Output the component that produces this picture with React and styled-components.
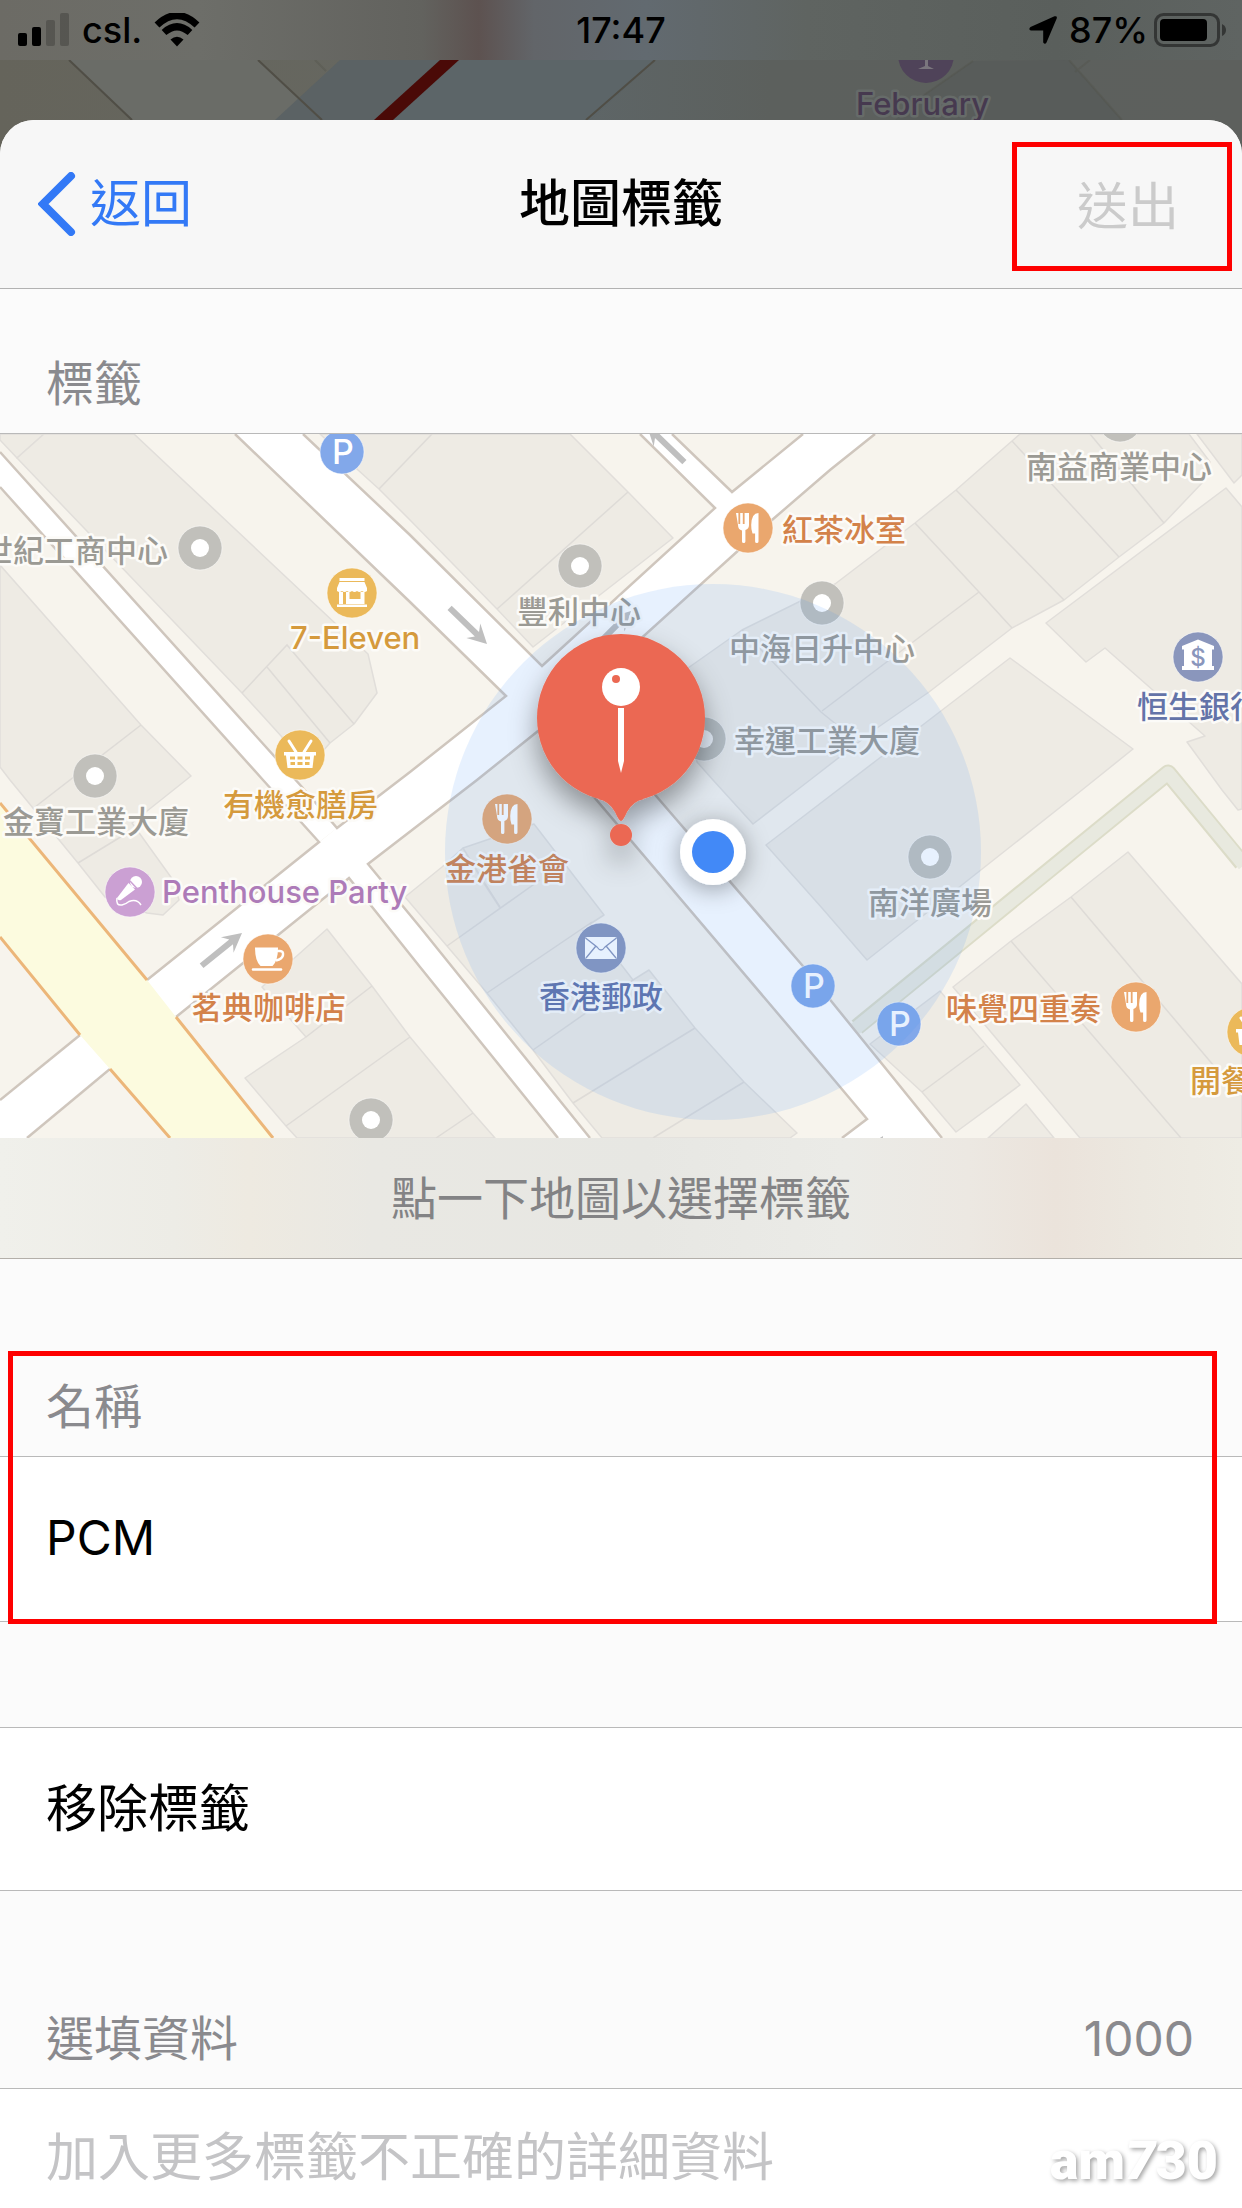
import React, { useState } from 'react';
import styled, { createGlobalStyle } from 'styled-components';

const FONT = 'Inter, "Noto Sans CJK TC", sans-serif';

const COLORS = {
	grey: { pin: '#c1c0bb', text: '#9b9a94' },
	amber: { pin: '#ebb95a', text: '#d59a3d' },
	orange: { pin: '#eaa76e', text: '#d3824a' },
	purple: { pin: '#cba0d3', text: '#ad7bb8' },
	indigo: { pin: '#8a96bc', text: '#6373a8' },
	blue: { pin: '#82a8ea', text: '#6373a8' },
};

const BUILDINGS = [
	'0,434 44,434 17,458 0,440',
	'17,458 44,434 134,434 337,625 368,654 377,693 354,724 330,743 313,762 282,737 242,693',
	'0,565 141,725 191,776 132,823 173,880 179,900 163,915 147,913 105,897 78,863 10,780 0,767',
	'320,434 358,470 379,489 410,520 497,609 533,647 673,538 628,492 570,434',
	'1020,434 1012,441 956,490 915,523 835,584 742,630 688,668 697,762 713,780 753,824 810,780 877,728 929,692 1012,628 1064,600 1119,557 1164,523 1202,483 1210,462 1189,434',
	'1197,434 1234,483 1242,475 1242,434',
	'1226,488 1046,623 1086,662 1105,648 1205,736 1187,742 1222,790 1238,810 1242,809 1242,507',
	'1010,658 1133,749 1082,790 867,960 822,908 766,845 877,760',
	'1128,852 1071,897 1011,941 953,987 1080,1138 1242,1138 1242,984',
	'940,991 870,1044 922,1092 956,1132 1020,1085',
	'1026,1104 988,1138 1054,1138',
	'405,897 442,867 463,848 500,908 485,885 463,848 534,824 604,915 590,924 633,980 649,970 695,1028 744,1082 797,1133 790,1138 602,1138 573,1103 533,1050 487,993 447,946',
	'327,929 372,986 410,1037 473,1113 495,1138 297,1138 286,1126 245,1078 306,1037 262,987',
];

const WALLS = [
	'242,693 287,645 354,724',
	'267,667 330,743',
	'141,725 35,807',
	'132,830 78,863',
	'432,434 379,489',
	'628,492 497,609',
	'1012,441 1119,557',
	'956,490 1064,600',
	'915,523 979,592 1012,628',
	'979,592 822,711',
	'1090,434 1164,523',
	'742,630 821,712 837,725',
	'1071,897 1214,1066',
	'1011,941 1181,1138',
	'984,1046 922,1092',
	'447,946 540,880',
	'487,993 592,922',
	'533,1050 633,980',
	'573,1103 695,1028',
	'653,1138 744,1082',
	'485,884 500,907',
	'372,986 306,1037',
	'410,1037 286,1126',
	'473,1113 436,1138',
];

const ROADS = [
	'0,452 302,787 337,828 319,842 263,780 0,487',
	'235,434 303,434 410,535 542,666 715,508 640,434 672,434 732,492 803,434 875,434 830,470 772,520 574,699 657,797 802,965 942,1138 842,1138 867,1119 830,1075 538,731 477,780 368,864 420,927 590,1138 558,1138 420,967 349,878 27,1138 0,1138 0,1100 337,828 506,696 410,602',
];

const KERBS = [
	'0,452 302,787 337,828 410,772 506,696 410,602 235,434',
	'0,487 263,780 319,842 147,980',
	'80,1035 0,1100',
	'303,434 410,535 542,666 715,508 640,434',
	'672,434 732,492 803,434',
	'875,434 830,470 772,520 574,699 657,797 802,965 942,1138',
	'842,1138 867,1119 830,1075 538,731 477,780 368,864 420,927 590,1138',
	'558,1138 420,967 349,878 176,1017',
	'110,1069 27,1138',
];

const ARROWS = [
	{ x: 487, y: 644, angle: 44 },
	{ x: 647, y: 426, angle: 224 },
	{ x: 631, y: 611, angle: -45 },
	{ x: 242, y: 933, angle: -39 },
	{ x: 883, y: 1136, angle: -60 },
];

const PLACES = [
	{ x: 200, y: 548, tone: 'grey', icon: 'dot', name: '世紀工商中心', tx: -18, ty: 562 },
	{ x: 95, y: 776, tone: 'grey', icon: 'dot', name: '金寶工業大廈', tx: 3, ty: 833 },
	{ x: 580, y: 566, tone: 'grey', icon: 'dot', name: '豐利中心', tx: 517, ty: 623 },
	{ x: 822, y: 603, tone: 'grey', icon: 'dot', name: '中海日升中心', tx: 729, ty: 660 },
	{ x: 704, y: 739, tone: 'grey', icon: 'dot', name: '幸運工業大廈', tx: 734, ty: 752 },
	{ x: 1120, y: 420, tone: 'grey', icon: 'dot', name: '南益商業中心', tx: 1026, ty: 478 },
	{ x: 930, y: 857, tone: 'grey', icon: 'dot', name: '南洋廣場', tx: 868, ty: 914 },
	{ x: 371, y: 1120, tone: 'grey', icon: 'dot' },
	{ x: 342, y: 452, tone: 'blue', icon: 'parking' },
	{ x: 813, y: 986, tone: 'blue', icon: 'parking' },
	{ x: 899, y: 1024, tone: 'blue', icon: 'parking' },
	{ x: 352, y: 593, tone: 'amber', icon: 'store', name: '7-Eleven', tx: 290, ty: 649 },
	{ x: 300, y: 755, tone: 'amber', icon: 'basket', name: '有機愈膳房', tx: 223, ty: 816 },
	{ x: 1252, y: 1032, tone: 'amber', icon: 'basket', name: '開餐', tx: 1190, ty: 1092 },
	{ x: 748, y: 528, tone: 'orange', icon: 'food', name: '紅茶冰室', tx: 782, ty: 541 },
	{ x: 507, y: 819, tone: 'orange', icon: 'food', name: '金港雀會', tx: 445, ty: 880 },
	{ x: 1136, y: 1007, tone: 'orange', icon: 'food', name: '味覺四重奏', tx: 946, ty: 1020 },
	{ x: 268, y: 959, tone: 'orange', icon: 'cup', name: '茗典咖啡店', tx: 191, ty: 1019 },
	{ x: 130, y: 892, tone: 'purple', icon: 'mic', name: 'Penthouse Party', tx: 162, ty: 903 },
	{ x: 601, y: 948, tone: 'indigo', icon: 'mail', name: '香港郵政', tx: 539, ty: 1008 },
	{ x: 1198, y: 657, tone: 'indigo', icon: 'bank', name: '恒生銀行', tx: 1137, ty: 718 },
];

function PlaceIcon({ icon, color }) {
	switch (icon) {
		case 'dot':
			return <circle r="9" fill="#fff" />;
		case 'parking':
			return (
				<PinLetter size={34} y="12" x="1" fill="#fff">
					P
				</PinLetter>
			);
		case 'food':
			return (
				<g fill="#fff">
					<path d="M-12-15h2.400v11h1.800v-11h2.600v11h1.800v-11H1v12q0 4-3.600 5v11.500q0 1.500-1.700 1.500t-1.700-1.500V2.500q-4-1-4-5.500z" />
					<path d="M10.500-15v28.500q0 1.500-1.700 1.500t-1.700-1.500V5.500H4.500Q3 1 3.200-3 3.500-15 10.500-15z" />
				</g>
			);
		case 'store':
			return (
				<g fill="#fff">
					<path d="M-12.500-15h25v3h-25zM-12.500-11h25l2.500 6v3q-2.500 2-5 0-2.500 2-5 0-2.500 2-5 0-2.500 2-5 0-2.500 2-5 0-2.500 2-5 0v-3z" />
					<path fillRule="evenodd" d="M-13-1h4v12h-4zM-6-1h3.500v7h11v-7h4v12h-18.500z" />
					<path d="M-15 11.500h30v2.500h-30z" />
				</g>
			);
		case 'basket':
			return (
				<g>
					<path d="M-11-14-4-3M11-14 4-3" stroke="#fff" strokeWidth="3" strokeLinecap="round" />
					<path d="M-16-3h32v3.500h-2L12.500 13h-25L-14 .5h-2z" fill="#fff" />
					<path
						d="M-10 1.500h5v3h-5zM-2.500 1.500h5v3h-5zM5 1.500h5v3h-5zM-9.500 7h4.500v3h-4.500zM-2.500 7h5v3h-5zM5 7h4.500v3H5z"
						fill={color}
					/>
				</g>
			);
		case 'cup':
			return (
				<g>
					<path d="M-13-11.500h23Q10 2 4.500 7h-12Q-13 2-13-11.500z" fill="#fff" />
					<path d="M9-8h3q3.500 0 3 4T8 1.500" fill="none" stroke="#fff" strokeWidth="2.500" />
					<path d="M-15 10.500h28" stroke="#fff" strokeWidth="2.500" strokeLinecap="round" />
				</g>
			);
		case 'mic':
			return (
				<g>
					<circle cx="6" cy="-10" r="6" fill="#fff" />
					<path d="M-1.500-9 5-2.500-9 8q-3 1-4-2z" fill="#fff" />
					<path d="M0-11 7-3.500" stroke={color} strokeWidth="1.500" />
					<path d="M-13 6q-1.500 8 5 7 4-1 7-3.500 8-3 12 3.500" fill="none" stroke="#fff" strokeWidth="1.500" />
				</g>
			);
		case 'mail':
			return (
				<g>
					<rect x="-16" y="-11" width="32" height="22" rx="2" fill="#fff" />
					<path
						d="M-15.500-10-4-1Q0 5 4-1L15.500-10M-15 10-5.500-1.500M15 10 5.500-1.500"
						fill="none"
						stroke={color}
						strokeWidth="1.300"
					/>
				</g>
			);
		case 'bank':
			return (
				<g>
					<path d="M-16-11 0-17.500 16-11v3.500h-2V9h2v4h-32V9h2V-7.500h-2z" fill="#fff" />
					<PinLetter size={24} y="9" fill={color}>
						$
					</PinLetter>
				</g>
			);
		default:
			return null;
	}
}

function Place({ x, y, tone, icon, name, tx, ty }) {
	const { pin, text } = COLORS[tone];
	const small = icon === 'dot' || icon === 'parking';

	return (
		<g>
			<g transform={`translate(${x} ${y})`}>
				<circle r={small ? 22 : 25} fill={pin} stroke="#fff" strokeOpacity="0.5" strokeWidth="1" />
				<PlaceIcon icon={icon} color={pin} />
			</g>
			{name && (
				<PlaceName x={tx} y={ty} fill={text}>
					{name}
				</PlaceName>
			)}
		</g>
	);
}

function StreetMap() {
	return (
		<MapCanvas viewBox="0 434 1242 704" role="img" aria-label="地圖">
			<defs>
				<filter id="pinShadow" x="-50%" y="-50%" width="200%" height="200%">
					<feDropShadow dx="0" dy="14" stdDeviation="14" floodOpacity="0.38" />
				</filter>
				<filter id="dotShadow" x="-100%" y="-100%" width="300%" height="300%">
					<feDropShadow dx="0" dy="4" stdDeviation="12" floodOpacity="0.35" />
				</filter>
			</defs>
			<rect y="434" width="1242" height="704" fill="#f7f4ed" />
			<g fill="#eeebe4" stroke="#e1deda" strokeWidth="1.500" strokeLinejoin="round">
				{BUILDINGS.map((points) => (
					<polygon key={points} points={points} />
				))}
			</g>
			<g fill="none" stroke="#dedbd7" strokeWidth="1.500">
				{WALLS.map((points) => (
					<polyline key={points} points={points} />
				))}
			</g>
			<g fill="none" strokeLinejoin="round">
				<path d="M857 1027 1168 773 1242 863" stroke="#dcdcc8" strokeWidth="17" />
				<path d="M855 1029 1168 773 1244 865" stroke="#e8e9df" strokeWidth="13" />
			</g>
			<g fill="#fff">
				{ROADS.map((points) => (
					<polygon key={points} points={points} />
				))}
			</g>
			<g fill="none" stroke="#cfc6bd" strokeWidth="2.500">
				{KERBS.map((points) => (
					<polyline key={points} points={points} />
				))}
			</g>
			<polygon points="0,803 147,980 176,1017 273,1138 170,1138 110,1069 80,1035 0,937" fill="#fcfbdf" />
			<path
				d="M0 803 147 980M176 1017 273 1138M0 937 80 1035M110 1069 170 1138"
				fill="none"
				stroke="#ecb679"
				strokeWidth="3"
			/>
			{ARROWS.map(({ x, y, angle }) => (
				<path
					key={`${x}-${y}`}
					d="M0 0-19-10-14-3H-52V3H-14L-19 10z"
					transform={`translate(${x} ${y}) rotate(${angle})`}
					fill="#bfbfbf"
				/>
			))}
			{PLACES.map((place) => (
				<Place key={`${place.x}-${place.y}`} {...place} />
			))}
			<circle cx="713" cy="852" r="268" fill="#428cfa" fillOpacity="0.127" />
			<g filter="url(#dotShadow)">
				<circle cx="713" cy="852" r="33" fill="#fff" />
			</g>
			<circle cx="713" cy="852" r="21" fill="#4289f7" />
			<g filter="url(#pinShadow)" fill="#eb6852">
				<circle cx="621" cy="718" r="84" />
				<path d="M598 799q11 2 17 13 4 9 6 9t6-9q6-11 17-13z" />
				<circle cx="621" cy="835" r="11" />
			</g>
			<circle cx="621" cy="687" r="19" fill="#fff" />
			<circle cx="616" cy="679" r="4" fill="#eb6852" />
			<path d="M618 708h6v53l-3 12-3-12z" fill="#fff" />
		</MapCanvas>
	);
}

function Backdrop() {
	return (
		<BackdropArt viewBox="0 0 1242 170" preserveAspectRatio="xMidYMin slice" aria-hidden="true">
			<defs>
				<linearGradient id="land">
					<stop offset="0" stopColor="#65645b" />
					<stop offset="0.300" stopColor="#666760" />
					<stop offset="0.450" stopColor="#5e6668" />
					<stop offset="0.620" stopColor="#5c605d" />
					<stop offset="1" stopColor="#5d605d" />
				</linearGradient>
				<linearGradient id="bar">
					<stop offset="0" stopColor="#6c6b65" />
					<stop offset="0.160" stopColor="#6d6e69" />
					<stop offset="0.340" stopColor="#62625e" />
					<stop offset="0.385" stopColor="#5d5250" />
					<stop offset="0.430" stopColor="#626569" />
					<stop offset="0.520" stopColor="#626a70" />
					<stop offset="0.650" stopColor="#5f6461" />
					<stop offset="0.850" stopColor="#5a5f5c" />
					<stop offset="1" stopColor="#5f6462" />
				</linearGradient>
			</defs>
			<rect width="1242" height="170" fill="url(#land)" />
			<path d="M69 60H258L322 120H132z" fill="#6a6c67" />
			<path d="M340 60H655L590 120H275z" fill="#5b6264" />
			<path d="M459 60H655L590 120H393z" fill="#5c6568" />
			<path d="M973 61 924 95 895 120H1122L1069 60z" fill="#585c5a" />
			<g fill="none" stroke="#504e46" strokeWidth="2">
				<path d="M69 60 132 120M258 60 322 120M655 60 586 120" />
				<path d="M315 60 326 71M973 61 924 95M1069 60 1122 120M1075 72 1090 60" strokeOpacity="0.300" />
			</g>
			<path d="M440 60H459L393 120H374z" fill="#4a0a07" />
			<circle cx="926" cy="55" r="28" fill="#4f4359" />
			<path d="M925 55h3v11l6 3h-16l7-3z" fill="#7a767d" />
			<PlaceName x="856" y="115" fill="#46394f" $dim>
				February
			</PlaceName>
			<rect width="1242" height="60" fill="url(#bar)" />
		</BackdropArt>
	);
}

function StatusBar() {
	return (
		<Status>
			<Carrier>
				<svg width="52" height="34" viewBox="0 0 52 34" aria-hidden="true">
					<rect y="20" width="9" height="13" rx="2" />
					<rect x="14" y="14" width="9" height="19" rx="2" />
					<rect x="28" y="7" width="9" height="26" rx="2" opacity="0.200" />
					<rect x="42" width="9" height="33" rx="2" opacity="0.200" />
				</svg>
				<span>csl.</span>
				<svg width="46" height="34" viewBox="0 0 46 34" aria-hidden="true">
					<path d="M3 12Q23-7 43 12" fill="none" stroke="#000" strokeWidth="7" />
					<path d="M10 19.500Q23 8 36 19.500" fill="none" stroke="#000" strokeWidth="7" />
					<path d="M16.500 26.500Q23 21 29.500 26.500L23 33.500z" />
				</svg>
			</Carrier>
			<span>17:47</span>
			<Power>
				<svg width="28" height="28" viewBox="0 0 28 28" aria-hidden="true">
					<path d="M25.500.3Q28.500-.5 27.700 2.500L17.500 26.500Q16 29 14.200 26.500V14.500H2Q-1 13.500 1.500 11z" />
				</svg>
				<BatteryLevel>
					87%
					<svg width="74" height="34" viewBox="0 0 74 34" aria-hidden="true">
						<rect x="1.500" y="1.500" width="63" height="31" rx="8" fill="none" stroke="#343635" strokeWidth="3" />
						<rect x="6" y="6" width="47" height="22" rx="4" />
						<path d="M68 11q4 2 4 6t-4 6z" fill="#343635" />
					</svg>
				</BatteryLevel>
			</Power>
		</Status>
	);
}

export default function App() {
	const [name, setName] = useState('PCM');
	const [details, setDetails] = useState('');

	return (
		<>
			<GlobalStyle />
			<Screen>
				<Backdrop />
				<StatusBar />
				<Sheet>
					<NavBar>
						<BackButton type="button">
							<svg width="38" height="64" viewBox="0 0 38 64" aria-hidden="true">
								<path d="M33 4 5 32 33 60" fill="none" stroke="#3379f6" strokeWidth="8" strokeLinecap="round" />
							</svg>
							返回
						</BackButton>
						<Title>地圖標籤</Title>
						<SubmitButton type="submit" form="tag-form" disabled>
							送出
						</SubmitButton>
					</NavBar>

					<Form id="tag-form">
						<SectionHeader as="h2" $first>
							標籤
						</SectionHeader>
						<StreetMap />
						<Hint>點一下地圖以選擇標籤</Hint>

						<NameGroup>
							<SectionHeader htmlFor="tag-name">名稱</SectionHeader>
							<NameInput id="tag-name" value={name} onChange={(e) => setName(e.target.value)} />
						</NameGroup>

						<RemoveButton type="button">移除標籤</RemoveButton>

						<SectionHeader htmlFor="tag-details">
							<span>選填資料</span>
							<span>{1000 - details.length}</span>
						</SectionHeader>
						<Details
							id="tag-details"
							rows={1}
							placeholder="加入更多標籤不正確的詳細資料"
							value={details}
							onChange={(e) => setDetails(e.target.value)}
						/>
					</Form>
				</Sheet>
				<Watermark>
					am<i>7</i>30
				</Watermark>
			</Screen>
		</>
	);
}

const GlobalStyle = createGlobalStyle`
	* {
		box-sizing: border-box;
	}
	body {
		margin: 0;
		font-family: ${FONT};
		color: #000;
		background: #fbfbfb;
	}
	button, input, textarea {
		font: inherit;
		color: inherit;
		border: 0;
		border-radius: 0;
		background: none;
	}
`;

const Screen = styled.div`
	position: relative;
	display: flex;
	flex-direction: column;
	min-height: 100vh;
`;

const BackdropArt = styled.svg`
	position: absolute;
	top: 0;
	left: 0;
	width: 100%;
	height: 170px;
`;

const Status = styled.header`
	position: relative;
	display: grid;
	grid-template-columns: 1fr auto 1fr;
	align-items: center;
	height: 60px;
	margin-bottom: 60px;
	font-size: 36px;
	font-weight: 500;
	line-height: 60px;
`;

const Carrier = styled.div`
	display: flex;
	align-items: center;
	gap: 12px;
	padding-left: 18px;
`;

const Power = styled.div`
	display: flex;
	align-items: center;
	justify-content: flex-end;
	gap: 12px;
	padding-right: 14px;
`;

const BatteryLevel = styled.span`
	display: flex;
	align-items: center;
	gap: 6px;
`;

const Sheet = styled.main`
	position: relative;
	display: flex;
	flex: 1;
	flex-direction: column;
	overflow: hidden;
	border-radius: 34px 34px 0 0;
	background: #fbfbfb;
`;

const NavBar = styled.nav`
	display: grid;
	grid-template-columns: 1fr auto 1fr;
	align-items: center;
	height: 169px;
	border-bottom: 1px solid #b2b2b2;
	background: #f7f7f7;
	font-size: 51px;
	line-height: 60px;
`;

const BackButton = styled.button`
	display: flex;
	align-items: center;
	justify-self: start;
	gap: 14px;
	margin-left: 38px;
	padding: 0;
	color: #3379f6;
`;

const Title = styled.h1`
	margin: 0;
	font-size: 51px;
	font-weight: 500;
`;

const SubmitButton = styled.button`
	align-self: end;
	justify-self: end;
	width: 220px;
	height: 129px;
	margin: 0 10px 17px 0;
	padding: 0 0 0 12px;
	border: 5px solid #fe0000;
	color: #cbcbcb;
`;

const Form = styled.form`
	display: flex;
	flex: 1;
	flex-direction: column;
`;

const SectionHeader = styled.label`
	display: flex;
	justify-content: space-between;
	margin: 0;
	padding: ${({ $first }) => ($first ? '66px' : '119px')} 48px 20px 46px;
	border-bottom: 1px solid #b9b9b9;
	color: #8a8a8e;
	font-size: 48px;
	font-weight: 400;
	line-height: 58px;
`;

const MapCanvas = styled.svg`
	display: block;
	width: 100%;
	height: auto;
`;

const PlaceName = styled.text`
	font-size: 31px;
	font-weight: 500;
	paint-order: stroke;
	stroke: ${({ $dim }) => ($dim ? '#666b69' : '#fcfbf8')};
	stroke-width: 5px;
	stroke-linejoin: round;
`;

const PinLetter = styled.text`
	font-size: ${({ size }) => size}px;
	font-weight: 500;
	text-anchor: middle;
`;

const Hint = styled.p`
	margin: 0;
	border-bottom: 1px solid #b3afa9;
	background: linear-gradient(
		90deg,
		#f0f0eb 0%,
		#edece6 14%,
		#eeeae1 20%,
		#e9e8e3 30%,
		#e7e7e3 52%,
		#ebebe7 68%,
		#ece8e2 78%,
		#ebe3db 85%,
		#ece8e0 92%,
		#eeece4 100%
	);
	color: #838385;
	font-size: 46px;
	line-height: 120px;
	text-align: center;
`;

const NameGroup = styled.div`
	position: relative;
	display: flex;
	flex-direction: column;
	margin-bottom: 105px;

	/* highlight frame over the label and its field */
	&::after {
		content: '';
		position: absolute;
		inset: 92px 25px -2px 8px;
		border: 5px solid #fe0000;
		pointer-events: none;
	}
`;

const NameInput = styled.input`
	width: 100%;
	height: 165px;
	padding: 0 46px 4px;
	border-bottom: 1px solid #b9b9b9;
	background: #fff;
	font-size: 48px;
	outline: none;
`;

const RemoveButton = styled.button`
	height: 164px;
	padding: 0 46px;
	border-top: 1px solid #b9b9b9;
	border-bottom: 1px solid #b9b9b9;
	background: #fff;
	font-size: 51px;
	line-height: 60px;
	text-align: left;
`;

const Details = styled.textarea`
	flex: 1;
	width: 100%;
	padding: 36px 46px 0;
	background: #fff;
	font-size: 52px;
	line-height: 66px;
	outline: none;
	overflow: hidden;
	resize: none;

	&::placeholder {
		color: #c4c4c6;
		opacity: 1;
	}
`;

const Watermark = styled.span`
	position: absolute;
	right: 24px;
	bottom: 14px;
	color: #fff;
	font-family: Roboto, sans-serif;
	font-size: 54px;
	font-weight: 900;
	line-height: 66px;
	text-shadow: 2px 2px 4px rgba(0, 0, 0, 0.35);
	pointer-events: none;
`;
